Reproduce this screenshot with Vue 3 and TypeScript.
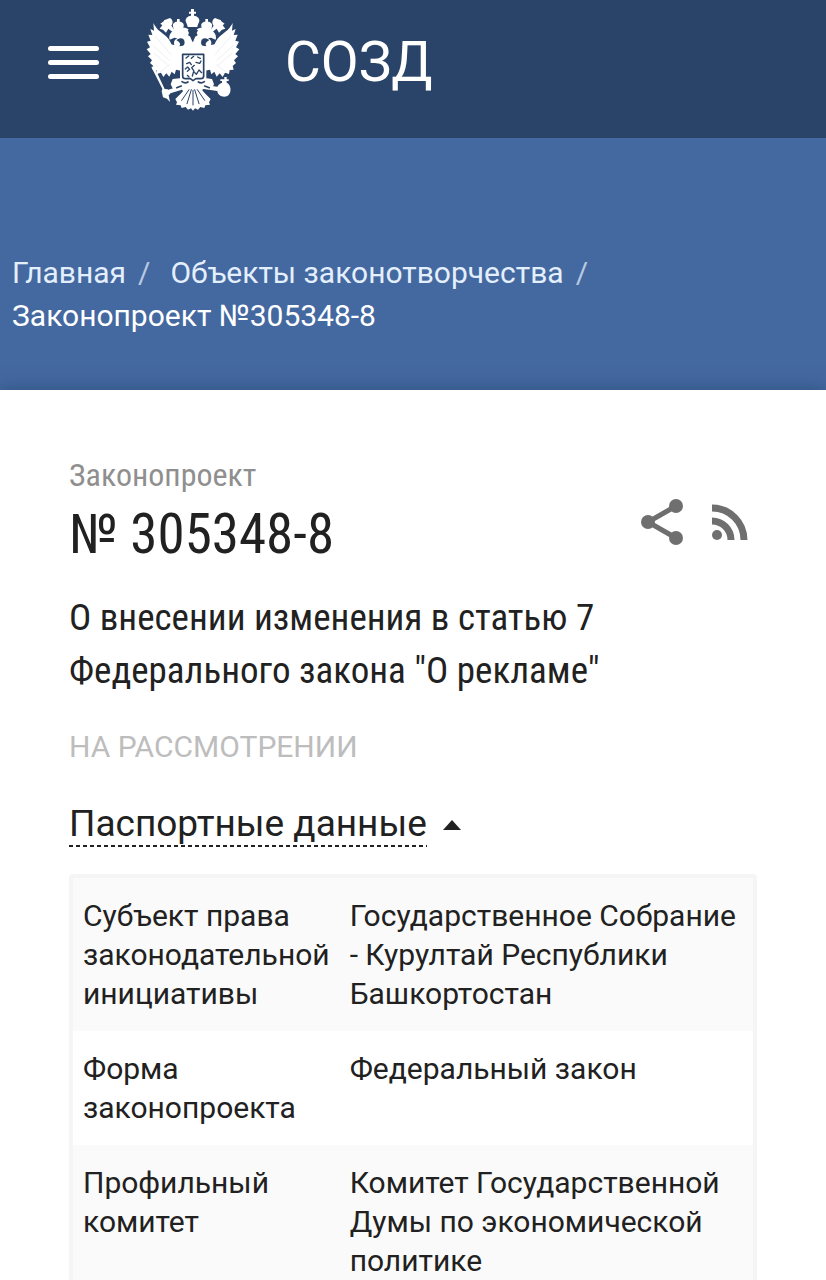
<script setup lang="ts">
import { ref } from 'vue'

interface PassportRow {
  label: string
  value: string
}

const opened = ref<boolean>(true)

const rows: PassportRow[] = [
  {
    label: 'Субъект права законодательной инициативы',
    value: 'Государственное Собрание - Курултай Республики Башкортостан',
  },
  { label: 'Форма законопроекта', value: 'Федеральный закон' },
  {
    label: 'Профильный комитет',
    value: 'Комитет Государственной Думы по экономической политике',
  },
]
</script>

<template>
  <div class="page">
    <header class="topbar">
      <button class="menu" type="button" aria-label="Меню">
        <span class="bar"></span>
        <span class="bar"></span>
        <span class="bar"></span>
      </button>
      <a class="brand" href="#">
        <svg class="emblem" viewBox="45 20 288 312" aria-hidden="true">
          <g fill="#fff">
            <!-- central crown -->
            <path d="M183 26h9v8h6v6h-6v6c10 1 17 8 16 16c-1 6-5 9-6 18h-29c-1-9-5-12-6-18c-1-8 6-15 16-16v-6h-6v-6h6z" />
            <!-- side crowns and ribbons -->
            <path d="M141 56h8v8c9 0 14 8 12 14l-4 18h-24l-4-18c-2-6 3-14 12-14z" />
            <path d="M226 56h8v8c9 0 14 8 12 14l-4 18h-24l-4-18c-2-6 3-14 12-14z" />
            <path d="M102 60l18-7c9 5 10 16 4 23l9 12-6 6-12-9-7 12-9-9-10-3 8-10-6-5 11-8z" />
            <path d="M273 60l-18-7c-9 5-10 16-4 23l-9 12 6 6 12-9 7 12 9-9 10-3-8-10 6-5-11-8z" />
            <!-- left wing -->
            <path d="M70 68c8 14 13 21 29 32c14 10 21 20 25 31c5 13 16 23 33 27v54l-19-4-4 14-9-8-7 15-9-10-9 11-7-13-12 4-2-12-12-1 3-11-10-9 6-8-12-12 8-7-12-14 10-6-9-17 11-3-7-18 12 1-6-18 11 5z" />
            <!-- right wing -->
            <path d="M308 68c-8 14-13 21-29 32c-14 10-21 20-25 31c-5 13-16 23-33 27v54l19-4 4 14 9-8 7 15 9-10 9 11 7-13 12 4 2-12 12-1-3-11 10-9-6-8 12-12-8-7 12-14-10-6 9-17-11-3 7-18-12 1 6-18-11 5z" />
            <!-- heads and necks -->
            <path d="M132 88l28-6c14 0 21 7 20 20c0 9 4 14 8 24c4-10 8-15 8-24c-1-13 6-20 20-20l28 6c10 8 17 18 13 30l-14-6-9 2c9 4 12 12 9 20l12-2c1 14-6 24-17 28l-18 5h-64l-18-5c-11-4-18-14-17-28l12 2c-3-8 0-16 9-20l-9-2-14 6c-4-12 3-22 13-30z" />
            <!-- sceptre -->
            <path d="M64 200l8-2 32 68 9 1 8 13-5 5 4 20-9-10-12-4-4-18 2-8z" />
            <path d="M110 270l42-13 4 11-40 12z" />
            <!-- orb -->
            <path d="M283 230h7v7h6v5h-6v5c17 8 16 42-7 42c-12 0-20-7-21-17l-46-7 3-12 43 6c3-6 8-10 14-12v-5h-5v-5h12z" />
            <!-- body and legs -->
            <path d="M150 158h79v76l17 2 6 16-7 14-24-3-13 20h-42l-13-20-24 3-7-14 6-16 22-2z" />
            <!-- tail -->
            <path d="M172 258h34l20 22 16 16-5 10 3 7-14 2-3 8-12-3-7 8-9-4-6 7-6-7-9 4-7-8-12 3-3-8-14-2 3-7-5-10 16-16z" />
          </g>
          <g fill="#2a4365">
            <path d="M173 90q16-11 31 0l-4 8 3 7-9 5-5 15-6-15-9-5 3-7z" />
            <path d="M139 119q13-10 23-1q5 12-3 18l-11 2q5-9-2-14z" />
            <path d="M238 119q-13-10-23-1q-5 12 3 18l11 2q-5-9 2-14z" />
          </g>
          <g fill="none" stroke="#2a4365" stroke-linecap="round" stroke-linejoin="round">
            <path stroke-width="5" d="M158 162h63v64q0 9-9 9h-14l-9 6-8-6h-15q-8 0-8-9z" />
            <path stroke-width="4" d="M168 173l8-6m8 7l7-6m12 2l8 4M170 190l9-4 5 7m14-7l11 3 4-7M166 206l7-6 6 7-7 6m15 14l4-14 8 9 8-13 8 8m-43 8l5 5m14-19l-6-9 8-7" />
            <path stroke-width="3" d="M184 268l-13 42M189 270v44M194 268l13 42M177 268l-22 32M202 268l22 32" />
            <path stroke-width="5" d="M156 244q9 7 18 1M223 244q-9 7-18 1M140 262l14-5M238 262l-14-5" />
            <path stroke-width="1" opacity=".25" d="M72 159l42 36M69 136l49 44M76 108l48 56M90 215l29-22M306 159l-42 36M309 136l-49 44M302 108l-48 56M288 215l-29-22" />
          </g>
        </svg>
        <span class="brand-name">СОЗД</span>
      </a>
    </header>

    <nav class="crumbs" aria-label="Навигация">
      <ol class="crumb-list">
        <li class="crumb"><a href="#">Главная</a><span class="slash">/</span></li>
        <li class="crumb"><a href="#">Объекты законотворчества</a><span class="slash">/</span></li>
        <li class="crumb current">Законопроект №305348-8</li>
      </ol>
    </nav>

    <main class="card">
      <div class="head">
        <h1 class="heading">
          <span class="kind">Законопроект</span>
          <span class="number">№ 305348-8</span>
        </h1>
        <div class="actions">
          <button class="icon-btn" type="button" aria-label="Поделиться">
            <svg width="42" height="46" viewBox="0 0 42 46">
              <path d="M35 7L7 23l28 16" fill="none" stroke="#6f6f6f" stroke-width="5" />
              <circle cx="35" cy="7" r="7" fill="#6f6f6f" />
              <circle cx="7" cy="23" r="7" fill="#6f6f6f" />
              <circle cx="35" cy="39" r="7" fill="#6f6f6f" />
            </svg>
          </button>
          <a class="icon-btn" href="#" aria-label="RSS">
            <svg width="37" height="46" viewBox="0 0 37 46">
              <path d="M1 9a32 32 0 0 1 32 32M1 22a19 19 0 0 1 19 19" fill="none" stroke="#6f6f6f" stroke-width="7" />
              <circle cx="6" cy="36" r="5" fill="#6f6f6f" />
            </svg>
          </a>
        </div>
      </div>

      <p class="title">О внесении изменения в статью 7 Федерального закона "О рекламе"</p>
      <p class="status">НА РАССМОТРЕНИИ</p>

      <button class="toggle" type="button" :aria-expanded="opened" @click="opened = !opened">
        <span class="toggle-text">Паспортные данные</span>
        <svg class="caret" :class="{ closed: !opened }" width="18" height="10" viewBox="0 0 18 10">
          <path d="M0 10L9 0l9 10z" fill="#212121" />
        </svg>
      </button>

      <table v-if="opened" class="passport">
        <tbody>
          <tr v-for="row in rows" :key="row.label">
            <th scope="row">{{ row.label }}</th>
            <td>{{ row.value }}</td>
          </tr>
        </tbody>
      </table>
    </main>
  </div>
</template>

<style>
body {
  margin: 0;
  background: #fff;
}
</style>

<style scoped>
.page {
  height: 100vh;
  overflow: hidden;
  font-family: Roboto, "Liberation Sans", sans-serif;
  font-size: 30px;
  color: #212121;
  background: #fff;
}

button {
  padding: 0;
  border: 0;
  background: none;
  color: inherit;
  font: inherit;
  cursor: pointer;
}

a {
  color: inherit;
  text-decoration: none;
}

.topbar {
  display: flex;
  align-items: flex-start;
  gap: 46px;
  box-sizing: border-box;
  height: 138px;
  padding: 7px 48px 0;
  background: #2a4368;
}

.menu {
  display: flex;
  flex-direction: column;
  gap: 9px;
  margin-top: 39px;
}

.bar {
  width: 51px;
  height: 5px;
  border-radius: 3px;
  background: #fff;
}

.brand {
  display: flex;
  gap: 44px;
  color: #fff;
}

.emblem {
  width: 96px;
  height: 104px;
}

.brand-name {
  font-size: 55px;
  line-height: 110px;
}

.crumbs {
  padding: 113px 12px 53px;
  background: #4468a0;
  color: #fff;
  line-height: 43px;
}

.crumb-list {
  display: flex;
  flex-wrap: wrap;
  column-gap: 20px;
  margin: 0;
  padding: 0;
  list-style: none;
}

.crumb a {
  color: #e3effc;
}

.slash {
  margin-left: 12px;
  color: #b9c8e0;
}

.card {
  position: relative;
  padding: 62px 69px 0;
  background: #fff;
  box-shadow: 0 0 16px rgba(20, 60, 90, 0.5);
}

.head {
  display: flex;
  justify-content: space-between;
}

.heading {
  display: flex;
  flex-direction: column;
  margin: 0;
  font-family: "Roboto Condensed", "Liberation Sans Narrow", Roboto, sans-serif;
  font-weight: 400;
}

.kind {
  font-size: 32px;
  line-height: 46px;
  color: #8f8f8f;
}

.number {
  font-size: 55px;
  line-height: 72px;
}

.actions {
  display: flex;
  align-items: flex-start;
  gap: 28px;
  padding: 47px 9px 0 0;
}

.icon-btn {
  display: block;
  line-height: 0;
}

.title {
  margin: 21px 0 30px;
  font-family: "Roboto Condensed", "Liberation Sans Narrow", Roboto, sans-serif;
  font-size: 37px;
  line-height: 53px;
}

.status {
  margin: 0;
  line-height: 40px;
  color: #bdbdbd;
}

.toggle {
  display: flex;
  align-items: center;
  gap: 16px;
  margin: 36px 0 27px;
}

.toggle-text {
  padding-bottom: 2px;
  background: repeating-linear-gradient(90deg, #212121 0 4px, transparent 4px 7px) left bottom / 100% 2px no-repeat;
  font-size: 37px;
  line-height: 42px;
}

.caret.closed {
  transform: rotate(180deg);
}

.passport {
  width: 100%;
  border: 4px solid #f5f5f5;
  border-radius: 4px;
  border-spacing: 0;
}

.passport th,
.passport td {
  padding: 18px 10px;
  font-weight: 400;
  line-height: 39px;
  text-align: left;
  vertical-align: top;
}

.passport th {
  width: 36%;
}

.passport tr:nth-child(odd) {
  background: #fafafa;
}
</style>
